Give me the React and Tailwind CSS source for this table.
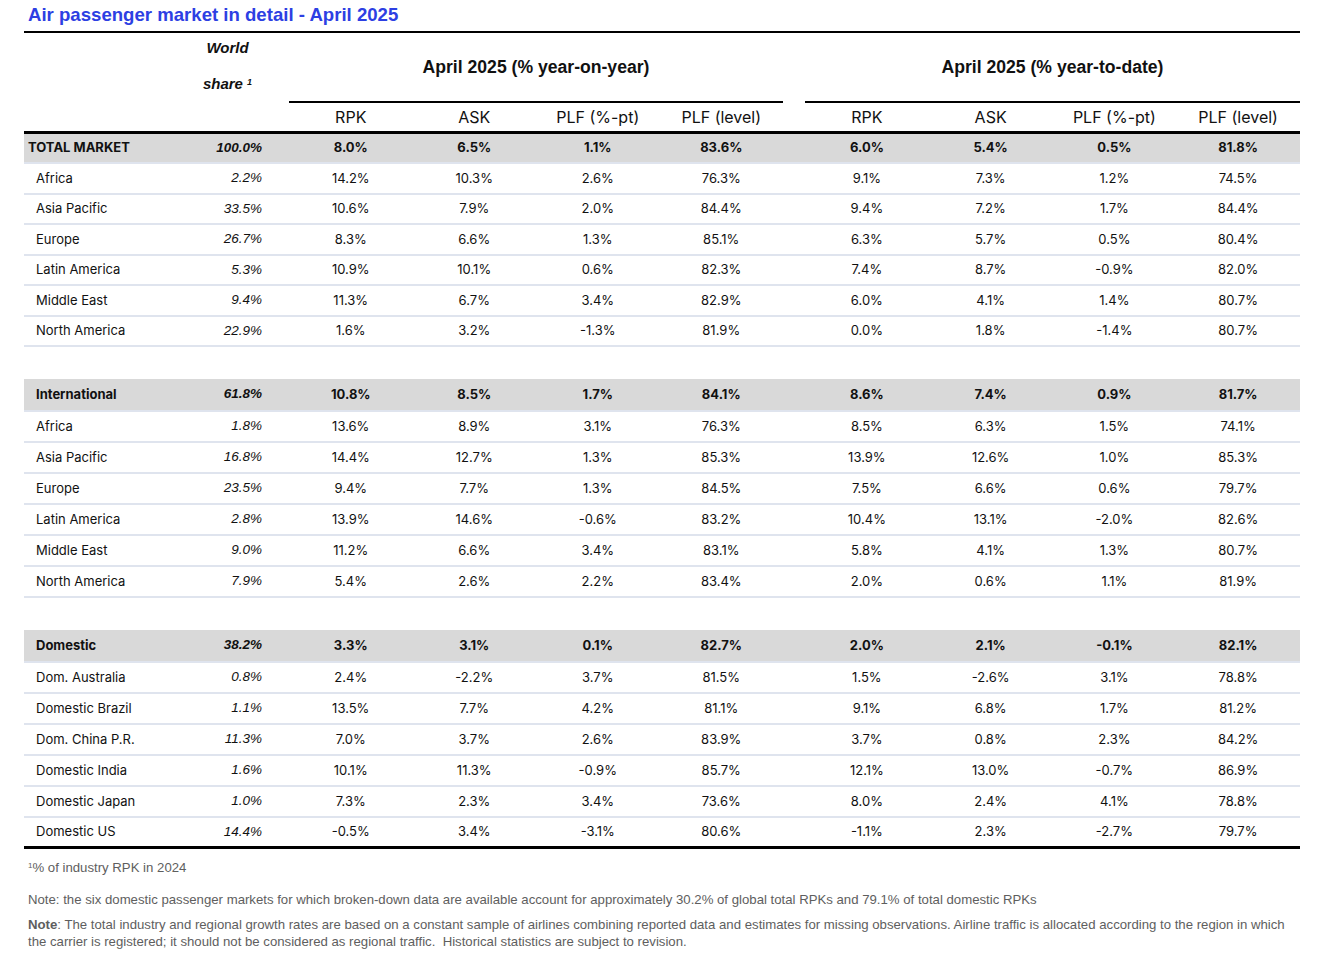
const sections = [
  {
    head: { name: "TOTAL MARKET", share: "100.0%", vals: ["8.0%", "6.5%", "1.1%", "83.6%", "6.0%", "5.4%", "0.5%", "81.8%"] },
    total: true,
    rows: [
      ["Africa", "2.2%", "14.2%", "10.3%", "2.6%", "76.3%", "9.1%", "7.3%", "1.2%", "74.5%"],
      ["Asia Pacific", "33.5%", "10.6%", "7.9%", "2.0%", "84.4%", "9.4%", "7.2%", "1.7%", "84.4%"],
      ["Europe", "26.7%", "8.3%", "6.6%", "1.3%", "85.1%", "6.3%", "5.7%", "0.5%", "80.4%"],
      ["Latin America", "5.3%", "10.9%", "10.1%", "0.6%", "82.3%", "7.4%", "8.7%", "-0.9%", "82.0%"],
      ["Middle East", "9.4%", "11.3%", "6.7%", "3.4%", "82.9%", "6.0%", "4.1%", "1.4%", "80.7%"],
      ["North America", "22.9%", "1.6%", "3.2%", "-1.3%", "81.9%", "0.0%", "1.8%", "-1.4%", "80.7%"],
    ],
  },
  {
    head: { name: "International", share: "61.8%", vals: ["10.8%", "8.5%", "1.7%", "84.1%", "8.6%", "7.4%", "0.9%", "81.7%"] },
    rows: [
      ["Africa", "1.8%", "13.6%", "8.9%", "3.1%", "76.3%", "8.5%", "6.3%", "1.5%", "74.1%"],
      ["Asia Pacific", "16.8%", "14.4%", "12.7%", "1.3%", "85.3%", "13.9%", "12.6%", "1.0%", "85.3%"],
      ["Europe", "23.5%", "9.4%", "7.7%", "1.3%", "84.5%", "7.5%", "6.6%", "0.6%", "79.7%"],
      ["Latin America", "2.8%", "13.9%", "14.6%", "-0.6%", "83.2%", "10.4%", "13.1%", "-2.0%", "82.6%"],
      ["Middle East", "9.0%", "11.2%", "6.6%", "3.4%", "83.1%", "5.8%", "4.1%", "1.3%", "80.7%"],
      ["North America", "7.9%", "5.4%", "2.6%", "2.2%", "83.4%", "2.0%", "0.6%", "1.1%", "81.9%"],
    ],
  },
  {
    head: { name: "Domestic", share: "38.2%", vals: ["3.3%", "3.1%", "0.1%", "82.7%", "2.0%", "2.1%", "-0.1%", "82.1%"] },
    rows: [
      ["Dom. Australia", "0.8%", "2.4%", "-2.2%", "3.7%", "81.5%", "1.5%", "-2.6%", "3.1%", "78.8%"],
      ["Domestic Brazil", "1.1%", "13.5%", "7.7%", "4.2%", "81.1%", "9.1%", "6.8%", "1.7%", "81.2%"],
      ["Dom. China P.R.", "11.3%", "7.0%", "3.7%", "2.6%", "83.9%", "3.7%", "0.8%", "2.3%", "84.2%"],
      ["Domestic India", "1.6%", "10.1%", "11.3%", "-0.9%", "85.7%", "12.1%", "13.0%", "-0.7%", "86.9%"],
      ["Domestic Japan", "1.0%", "7.3%", "2.3%", "3.4%", "73.6%", "8.0%", "2.4%", "4.1%", "78.8%"],
      ["Domestic US", "14.4%", "-0.5%", "3.4%", "-3.1%", "80.6%", "-1.1%", "2.3%", "-2.7%", "79.7%"],
    ],
  },
];

const cols = "grid grid-cols-[166px_75px_24px_repeat(4,123.5px)_22px_repeat(4,123.75px)]";
const sub = ["RPK", "ASK", "PLF (%-pt)", "PLF (level)"];
const inter = "font-['Inter',sans-serif]";
const arial = "font-['Liberation_Sans',Arial,sans-serif]";

const Row = ({ name, share, vals, bold, total, last, h }) => (
  <div
    className={`${cols} items-center ${h} ${bold ? "bg-[#d9d9d9] font-bold" : ""} ${
      last ? "border-b-[3px] border-black" : "border-b-2 border-[#dfe4ee]"
    } text-[13px] text-[#111]`}
  >
    <div className={`${total ? "pl-[4px]" : "pl-[12px]"} whitespace-nowrap`}>{name}</div>
    <div className={`${arial} italic text-[13.5px] text-right pr-[3px]`}>{share}</div>
    <div />
    {vals.slice(0, 4).map((v, i) => (
      <div key={i} className="text-center">{v}</div>
    ))}
    <div />
    {vals.slice(4).map((v, i) => (
      <div key={i} className="text-center">{v}</div>
    ))}
  </div>
);

export default function App() {
  return (
    <div className={`min-h-screen bg-white px-[24px] ${inter}`}>
      {/* Title */}
      <h1 className={`${arial} h-[31px] pl-[4px] pt-[3px] text-[18.6px] font-bold leading-[24px] text-[#2d3fe3]`}>
        Air passenger market in detail - April 2025
      </h1>

      {/* Header */}
      <div className="border-t-2 border-black">
        <div className={`${cols} border-b-[3px] border-black`}>
          <div />
          <div className={`${arial} text-center text-[15px] font-bold italic text-[#111]`}>
            <div className="h-[30px] leading-[30px]">World</div>
            <div className="mt-[6px] leading-[30px]">
              share <sup className="text-[9px]">1</sup>
            </div>
          </div>
          <div />
          {[0, 1].map((g) => (
            <div key={g} className={`${g === 0 ? "col-span-4" : "col-start-9 col-span-4"} flex flex-col`}>
              <div className={`${arial} flex h-[70px] items-center justify-center border-b-2 border-black pt-[1px] text-[17.6px] font-bold text-[#111]`}>
                {g === 0 ? "April 2025 (% year-on-year)" : "April 2025 (% year-to-date)"}
              </div>
              <div className="grid h-[28px] grid-cols-4 items-center text-[16px] text-[#111]">
                {sub.map((s) => (
                  <div key={s} className="text-center">{s}</div>
                ))}
              </div>
            </div>
          ))}
        </div>

        {/* Body */}
        {sections.map((sec, si) => (
          <div key={si}>
            {si > 0 && <div className="h-[32px]" />}
            <Row
              name={sec.head.name}
              share={sec.head.share}
              vals={sec.head.vals}
              bold
              total={sec.total}
              h={sec.total ? "h-[30px]" : "h-[33px]"}
            />
            {sec.rows.map((r, ri) => (
              <Row
                key={ri}
                name={r[0]}
                share={r[1]}
                vals={r.slice(2)}
                last={si === 2 && ri === sec.rows.length - 1}
                h={si === 0 ? "h-[30.5px]" : "h-[31px]"}
              />
            ))}
          </div>
        ))}
      </div>

      {/* Footnotes */}
      <div className={`${arial} w-[1262px] pl-[4px] text-[13.2px] text-[#5e5e5e]`}>
        <p className="mt-[10px] leading-[17px]">
          <sup className="text-[8px]">1</sup>% of industry RPK in 2024
        </p>
        <p className="mt-[15px] leading-[17px]">
          Note: the six domestic passenger markets for which broken-down data are available account for approximately 30.2% of global total RPKs and 79.1% of total domestic RPKs
        </p>
        <p className="mt-[8px] leading-[17px]">
          <b>Note</b>: The total industry and regional growth rates are based on a constant sample of airlines combining reported data and estimates for missing observations. Airline traffic is allocated according to the region in which the carrier is registered; it should not be considered as regional traffic.&nbsp; Historical statistics are subject to revision.
        </p>
      </div>
    </div>
  );
}
